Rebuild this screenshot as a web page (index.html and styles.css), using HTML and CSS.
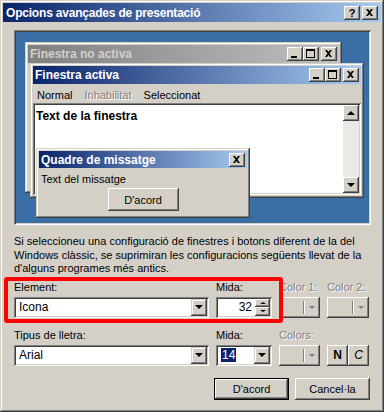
FILE: index.html
```html
<!DOCTYPE html>
<html lang="ca">
<head>
<meta charset="UTF-8">
<title>Opcions avançades de presentació</title>
<link rel="stylesheet" href="styles.css">
</head>
<body>

<div class="dialog">
    <div class="titlebar">
        <span class="title">Opcions avançades de presentació</span>
        <span class="tbtn help">?</span>
        <span class="tbtn"><svg width="16" height="14"><path d="M4 3h2l1.5 2 1.5-2h2L8.5 6.5 11 10H9L7.5 8 6 10H4l2.5-3.5z"/></svg></span>
    </div>

    <div class="content">
        <!-- preview of the window parts -->
        <div class="preview">
            <div class="desk">
                <div class="win inactive">
                    <div class="wtitle">
                        <span>Finestra no activa</span>
                        <span class="wbtns">
                            <span class="tbtn"><svg width="16" height="14"><rect x="4" y="9" width="6" height="2"/></svg></span>
                            <span class="tbtn"><svg width="16" height="14"><path d="M3 2h9v9H3zM4 4v6h7V4z" fill-rule="evenodd"/></svg></span>
                            <span class="tbtn gap"><svg width="16" height="14"><path d="M4 3h2l1.5 2 1.5-2h2L8.5 6.5 11 10H9L7.5 8 6 10H4l2.5-3.5z"/></svg></span>
                        </span>
                    </div>
                </div>

                <div class="win active">
                    <div class="wtitle">
                        <span>Finestra activa</span>
                        <span class="wbtns">
                            <span class="tbtn"><svg width="16" height="14"><rect x="4" y="9" width="6" height="2"/></svg></span>
                            <span class="tbtn"><svg width="16" height="14"><path d="M3 2h9v9H3zM4 4v6h7V4z" fill-rule="evenodd"/></svg></span>
                            <span class="tbtn gap"><svg width="16" height="14"><path d="M4 3h2l1.5 2 1.5-2h2L8.5 6.5 11 10H9L7.5 8 6 10H4l2.5-3.5z"/></svg></span>
                        </span>
                    </div>
                    <div class="menu">
                        <span>Normal</span>
                        <span class="disabled">Inhabilitat</span>
                        <span>Seleccionat</span>
                    </div>
                    <div class="textbox">
                        <div class="wtext">Text de la finestra</div>
                        <div class="scrollbar">
                            <span class="sbtn"><span class="arrow-up"></span></span>
                            <span class="track"></span>
                            <span class="sbtn"><span class="arrow-down"></span></span>
                        </div>
                    </div>
                </div>

                <div class="win msgbox">
                    <div class="wtitle">
                        <span>Quadre de missatge</span>
                        <span class="wbtns">
                            <span class="tbtn"><svg width="16" height="14"><path d="M4 3h2l1.5 2 1.5-2h2L8.5 6.5 11 10H9L7.5 8 6 10H4l2.5-3.5z"/></svg></span>
                        </span>
                    </div>
                    <div class="msgtext">Text del missatge</div>
                    <div class="msgfoot"><span class="btn small">D'acord</span></div>
                </div>
            </div>
        </div>

        <p class="info">Si seleccioneu una configuració de finestres i botons diferent de la del<br>
        Windows clàssic, se suprimiran les configuracions següents llevat de la<br>
        d'alguns programes més antics.</p>

        <div class="fieldrow first">
            <label>Element:</label>
            <label>Mida:</label>
            <label class="disabled">Color 1:</label>
            <label class="disabled">Color 2:</label>

            <div class="combo"><span class="value">Icona</span><span class="drop"><span class="arrow-down"></span></span></div>
            <div class="spin"><span class="value">32</span><span class="spinbtns"><span class="sbtn half"><span class="arrow-up tiny"></span></span><span class="sbtn half"><span class="arrow-down tiny"></span></span></span></div>
            <div class="colorbtn"><span class="sep"></span><span class="arrow-down gray"></span></div>
            <div class="colorbtn"><span class="sep"></span><span class="arrow-down gray"></span></div>
        </div>

        <div class="fieldrow">
            <label>Tipus de lletra:</label>
            <label>Mida:</label>
            <label class="disabled">Colors:</label>
            <span></span>

            <div class="combo"><span class="value">Arial</span><span class="drop"><span class="arrow-down"></span></span></div>
            <div class="combo"><span class="value"><span class="selected">14</span></span><span class="drop"><span class="arrow-down"></span></span></div>
            <div class="colorbtn"><span class="sep"></span><span class="arrow-down gray"></span></div>
            <div class="styles">
                <span class="btn sq bold">N</span>
                <span class="btn sq italic">C</span>
            </div>
        </div>

        <div class="actions">
            <span class="btn default">D'acord</span>
            <span class="btn">Cancel·la</span>
        </div>
    </div>

    <div class="highlight"></div>
</div>

</body>
</html>
```

FILE: styles.css
```css
/* Classic dialog */
* {
    box-sizing: border-box;
}
body {
    margin: 0;
    font-family: "Liberation Sans", Arial, sans-serif;
    font-size: 11px;
    color: #000;
    background: #d4d0c8;
}
.dialog {
    position: relative;
    width: 384px;
    height: 412px;
    padding: 3px;
    background: #d4d0c8;
    box-shadow: inset -1px -1px #404040, inset 1px 1px #d4d0c8, inset -2px -2px #808080, inset 2px 2px #fff;
}
.titlebar {
    display: flex;
    align-items: center;
    height: 19px;
    padding: 0 3px;
    background: linear-gradient(to right, #0a246a, #a6caf0);
    color: #fff;
    font-weight: bold;
    font-size: 12px;
}
.title {
    flex: 1;
    letter-spacing: -0.2px;
}
.tbtn {
    display: flex;
    align-items: center;
    justify-content: center;
    width: 16px;
    height: 14px;
    background: #d4d0c8;
    color: #000;
    box-shadow: inset -1px -1px #404040, inset 1px 1px #fff, inset -2px -2px #808080, inset 2px 2px #d4d0c8;
}
.tbtn svg {
    display: block;
    fill: #000;
}
.help {
    margin-right: 2px;
    font-size: 11px;
}
.content {
    padding: 8px 11px 0;
}

/* preview */
.preview {
    width: 357px;
    height: 195px;
    padding: 2px;
    box-shadow: inset 1px 1px #808080, inset -1px -1px #fff, inset 2px 2px #404040, inset -2px -2px #d4d0c8;
}
.desk {
    position: relative;
    height: 100%;
    background: #3a6ea5;
}
.win {
    position: absolute;
    display: flex;
    flex-direction: column;
    padding: 3px;
    background: #d4d0c8;
    box-shadow: inset -1px -1px #404040, inset 1px 1px #d4d0c8, inset -2px -2px #808080, inset 2px 2px #fff;
}
.inactive {
    left: 9px;
    top: 10px;
    width: 317px;
    height: 151px;
}
.active {
    left: 14px;
    top: 31px;
    width: 334px;
    height: 135px;
}
.msgbox {
    left: 20px;
    top: 116px;
    width: 214px;
    height: 70px;
}
.wtitle {
    display: flex;
    align-items: center;
    height: 18px;
    padding: 0 2px;
    background: linear-gradient(to right, #0a246a, #a6caf0);
    color: #fff;
    font-weight: bold;
    font-size: 12px;
}
.inactive .wtitle {
    background: linear-gradient(to right, #808080, #c0c0c0);
    color: #d4d0c8;
}
.msgbox .wtitle {
    height: 17px;
}
.wtitle > span:first-child {
    flex: 1;
}
.wbtns {
    display: flex;
}
.wbtns .gap {
    margin-left: 2px;
}
.menu {
    display: flex;
    gap: 12px;
    height: 19px;
    align-items: center;
    padding: 2px 0 0 4px;
}
.disabled {
    color: #808080;
    text-shadow: 1px 1px #fff;
}
.textbox {
    flex: 1;
    display: flex;
    background: #fff;
    padding: 2px;
    box-shadow: inset 1px 1px #808080, inset -1px -1px #fff, inset 2px 2px #404040, inset -2px -2px #d4d0c8;
}
.wtext {
    flex: 1;
    padding: 4px 1px;
    font-weight: bold;
    font-size: 12px;
}
.scrollbar {
    display: flex;
    flex-direction: column;
    width: 16px;
    background: #ebe9e4;
}
.track {
    flex: 1;
}
.sbtn {
    display: flex;
    align-items: center;
    justify-content: center;
    width: 16px;
    height: 16px;
    background: #d4d0c8;
    box-shadow: inset -1px -1px #404040, inset 1px 1px #fff, inset -2px -2px #808080, inset 2px 2px #d4d0c8;
}
.arrow-up {
    width: 0;
    height: 0;
    border-left: 4px solid transparent;
    border-right: 4px solid transparent;
    border-bottom: 4px solid #000;
}
.arrow-down {
    width: 0;
    height: 0;
    border-left: 4px solid transparent;
    border-right: 4px solid transparent;
    border-top: 4px solid #000;
}
.arrow-up.tiny {
    border-width: 0 3px 2px;
    border-bottom-color: #000;
}
.arrow-down.tiny {
    border-width: 2px 3px 0;
    border-top-color: #000;
}
.arrow-down.gray {
    border-width: 3px 3px 0;
    border-top-color: #808080;
}
.msgtext {
    padding: 5px 2px 0;
    height: 19px;
}
.msgfoot {
    display: flex;
    justify-content: center;
    padding-top: 1px;
}

/* buttons */
.btn {
    display: inline-flex;
    align-items: center;
    justify-content: center;
    width: 75px;
    height: 22px;
    background: #d4d0c8;
    box-shadow: inset -1px -1px #404040, inset 1px 1px #fff, inset -2px -2px #808080, inset 2px 2px #d4d0c8;
}
.btn.small {
    width: 71px;
    height: 23px;
}
.btn.default {
    box-shadow: inset 0 0 0 1px #000, inset -2px -2px #404040, inset 2px 2px #fff, inset -3px -3px #808080;
}

/* info text */
.info {
    margin: 10px 0 0 0;
    line-height: 13.5px;
    white-space: nowrap;
}

/* form fields */
.fieldrow {
    display: grid;
    grid-template-columns: 195px 56px 41px 42px;
    grid-template-rows: 13px 21px;
    column-gap: 7px;
    row-gap: 3px;
    margin-top: 11px;
}
.fieldrow.first {
    margin-top: 5px;
}
.fieldrow label {
    line-height: 13px;
}
.combo,
.spin {
    display: flex;
    height: 21px;
    padding: 2px;
    background: #fff;
    box-shadow: inset 1px 1px #808080, inset -1px -1px #fff, inset 2px 2px #404040, inset -2px -2px #d4d0c8;
}
.value {
    flex: 1;
    display: flex;
    align-items: center;
    padding-left: 3px;
    font-size: 12px;
}
.spin .value {
    justify-content: flex-end;
    padding-right: 3px;
}
.selected {
    background: #0a246a;
    color: #fff;
    padding: 0 1px;
    line-height: 14px;
}
.drop {
    display: flex;
    align-items: center;
    justify-content: center;
    width: 16px;
    background: #d4d0c8;
    box-shadow: inset -1px -1px #404040, inset 1px 1px #d4d0c8, inset -2px -2px #808080, inset 2px 2px #fff;
}
.spinbtns {
    display: flex;
    flex-direction: column;
    width: 15px;
}
.sbtn.half {
    width: 15px;
    height: 8.5px;
}
.colorbtn {
    display: flex;
    align-items: center;
    justify-content: flex-end;
    height: 21px;
    padding-right: 5px;
    background: #d4d0c8;
    box-shadow: inset -1px -1px #404040, inset 1px 1px #fff, inset -2px -2px #808080, inset 2px 2px #d4d0c8;
}
.sep {
    width: 2px;
    height: 13px;
    margin-right: 4px;
    border-left: 1px solid #808080;
    border-right: 1px solid #fff;
}
.styles {
    display: flex;
}
.btn.sq {
    width: 21px;
    height: 21px;
    font-size: 12px;
}
.bold {
    font-weight: bold;
}
.italic {
    font-style: italic;
}

.actions {
    display: flex;
    justify-content: flex-end;
    gap: 6px;
    margin-top: 12px;
}

/* red annotation frame */
.highlight {
    position: absolute;
    left: 4px;
    top: 277px;
    width: 279px;
    height: 46px;
    border: 4px solid #ff0000;
    border-radius: 3px;
}
```
